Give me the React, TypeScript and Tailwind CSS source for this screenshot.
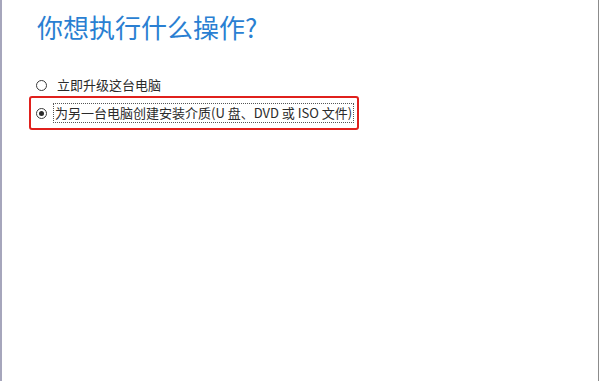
import React from "react";

const font = { fontFamily: '"Microsoft YaHei", "Noto Sans CJK SC", "Noto Sans", sans-serif' };

function Radio({ checked }: { checked?: boolean }) {
  return (
    <span className="flex h-[11px] w-[11px] shrink-0 items-center justify-center rounded-full border border-[#3a3a3a] bg-white">
      {checked && <span className="h-[5px] w-[5px] rounded-full bg-[#2a2a2a]" />}
    </span>
  );
}

export default function App() {
  return (
    <div className="h-[381px] w-[600px] overflow-hidden bg-white" style={font}>
      <div className="flex h-full w-[599px] border-l-2 border-r border-l-[#a6a6bc] border-r-[#8c8c8c]">
        <div className="flex flex-1 flex-col pt-[9px]">
          <h1 className="ml-[35px] text-[26px] leading-[36px] font-normal text-[#2a7fd2]">你想执行什么操作?</h1>
          <div className="ml-[27px] mt-[28px] flex flex-col items-start">
            <div className="flex h-[24px] items-center pl-[7px] text-[13px] text-[#2a2a2a]">
              <Radio />
              <span className="ml-[8px] px-[2px] py-[1px] leading-[18px]">立即升级这台电脑</span>
            </div>
            <div className="-mt-[1px] flex h-[34px] w-[330px] items-center rounded-[3px] border-2 border-[#e0201c] pl-[5px] text-[13px] text-[#2a2a2a]">
              <Radio checked />
              <span className="ml-[6px] border border-dotted border-[#555] px-[1px] py-[0px] leading-[18px] whitespace-nowrap">
                为另一台电脑创建安装介质(U 盘、DVD 或 ISO 文件)
              </span>
            </div>
          </div>
        </div>
      </div>
    </div>
  );
}
